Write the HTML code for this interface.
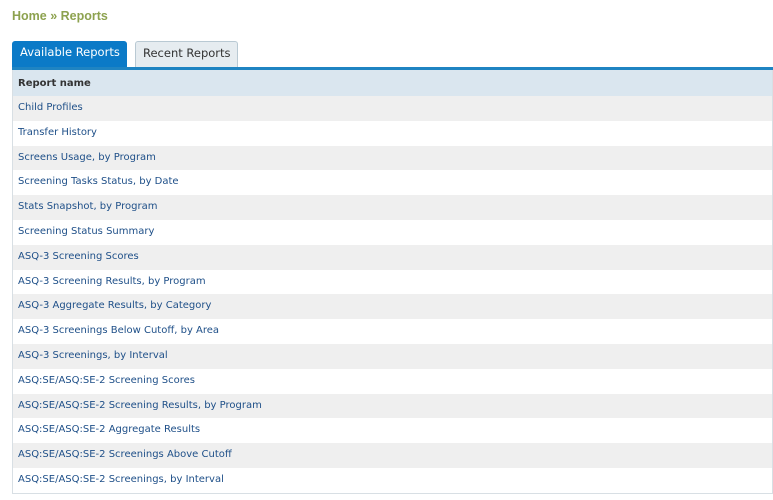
<!DOCTYPE html>
<html><head><meta charset="utf-8"><style>
body{margin:0;background:#fff;font-family:"DejaVu Sans","Liberation Sans",sans-serif;}
.bc{position:absolute;left:12px;top:9px;font-size:12.5px;font-weight:bold;color:#8da24f;font-family:"Liberation Sans",sans-serif;}
.tab{position:absolute;font-size:11.5px;font-family:"DejaVu Sans",sans-serif;box-sizing:border-box;}
.t1{left:12px;top:41px;width:115px;height:28px;background:#0b7ac7;color:#fff;border-radius:3px 3px 0 0;padding:4px 0 0 8px;}
.t2{left:135px;top:41px;width:103px;height:27px;background:#e6ecf0;color:#333;border:1px solid #b9c9d3;border-bottom:none;border-radius:3px 3px 0 0;padding:4px 0 0 7px;}
.line{position:absolute;left:12px;top:67px;width:761px;height:3px;background:#1f84c2;}
.tbl{position:absolute;left:12px;top:70px;width:759px;border-left:1px solid #d8dfe4;border-right:1px solid #d8dfe4;border-bottom:1px solid #d8dfe4;}
.r{height:24.8px;line-height:24.8px;padding-left:5px;font-size:10px;color:#1e4f88;}
.r:nth-child(even){background:#efefef;}
.h{background:#dae6ef !important;font-weight:bold;color:#333;height:26px;line-height:27px;}
</style></head><body>
<div class="bc">Home » Reports</div>
<div class="tab t1">Available Reports</div>
<div class="tab t2">Recent Reports</div>
<div class="line"></div>
<div class="tbl">
<div class="r h">Report name</div>
<div class="r">Child Profiles</div>
<div class="r">Transfer History</div>
<div class="r">Screens Usage, by Program</div>
<div class="r">Screening Tasks Status, by Date</div>
<div class="r">Stats Snapshot, by Program</div>
<div class="r">Screening Status Summary</div>
<div class="r">ASQ-3 Screening Scores</div>
<div class="r">ASQ-3 Screening Results, by Program</div>
<div class="r">ASQ-3 Aggregate Results, by Category</div>
<div class="r">ASQ-3 Screenings Below Cutoff, by Area</div>
<div class="r">ASQ-3 Screenings, by Interval</div>
<div class="r">ASQ:SE/ASQ:SE-2 Screening Scores</div>
<div class="r">ASQ:SE/ASQ:SE-2 Screening Results, by Program</div>
<div class="r">ASQ:SE/ASQ:SE-2 Aggregate Results</div>
<div class="r">ASQ:SE/ASQ:SE-2 Screenings Above Cutoff</div>
<div class="r">ASQ:SE/ASQ:SE-2 Screenings, by Interval</div>
</div>
</body></html>
